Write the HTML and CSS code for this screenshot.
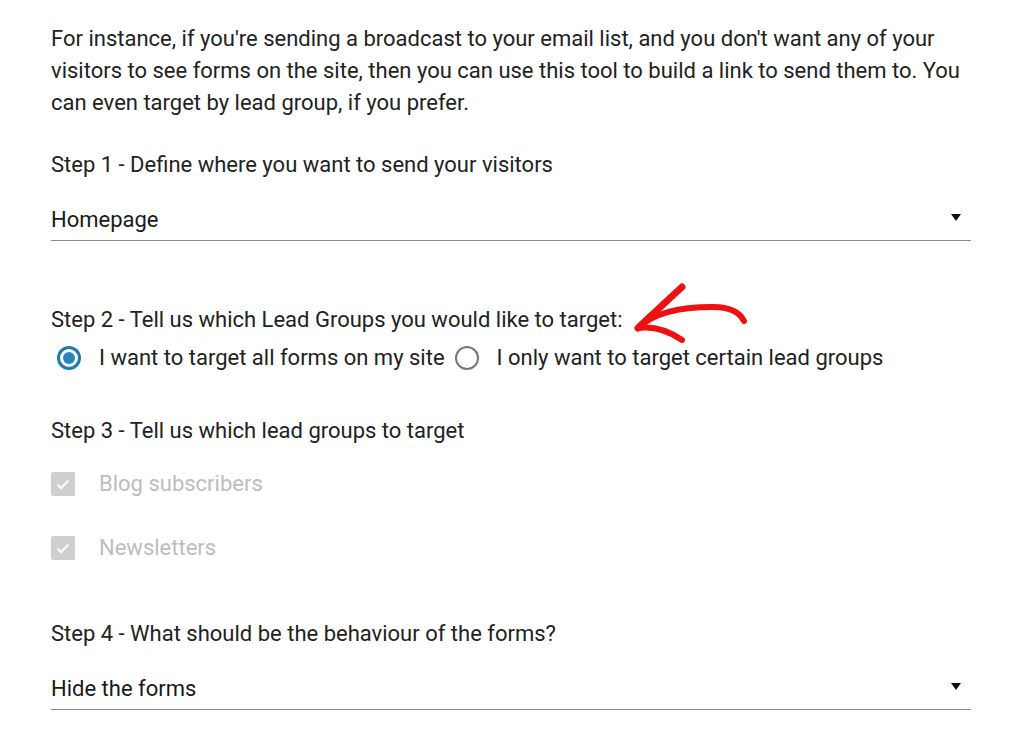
FILE: index.html
```html
<!DOCTYPE html>
<html lang="en">
<head>
    <meta charset="UTF-8">
    <meta name="viewport" content="width=device-width, initial-scale=1.0">
    <title>Link Builder</title>
    <link rel="stylesheet" href="styles.css">
</head>
<body>
    <div class="container">
        <p class="intro">For instance, if you're sending a broadcast to your email list, and you don't want any of your visitors to see forms on the site, then you can use this tool to build a link to send them to. You can even target by lead group, if you prefer.</p>

        <div class="step step-one">
            <div class="step-label">Step 1 - Define where you want to send your visitors</div>
            <div class="select">
                <span>Homepage</span>
                <svg class="caret" width="10" height="7" viewBox="0 0 10 7"><path d="M0 0 H10 L5 7 Z" fill="#111"/></svg>
            </div>
        </div>

        <div class="step step-two">
            <div class="step-label">Step 2 - Tell us which Lead Groups you would like to target:</div>
            <div class="radio-row">
                <label class="radio checked"><span class="radio-dot"></span>I want to target all forms on my site</label>
                <label class="radio"><span class="radio-dot"></span>I only want to target certain lead groups</label>
            </div>
            <!-- hand drawn arrow pointing at the label -->
            <svg class="arrow" width="130" height="75" viewBox="0 0 130 75">
                <path d="M57 7 C46 17 28 34 13 48" stroke="#ee1111" stroke-width="7" fill="none" stroke-linecap="round"/>
                <path d="M13 48 C30 31 60 27 88 27 C104 27 114 31 119 41" stroke="#ee1111" stroke-width="6" fill="none" stroke-linecap="round"/>
                <path d="M13 48 C28 46 44 51 57 60" stroke="#ee1111" stroke-width="6" fill="none" stroke-linecap="round"/>
            </svg>
        </div>

        <div class="step step-three">
            <div class="step-label">Step 3 - Tell us which lead groups to target</div>
            <div class="checks">
                <label class="check"><span class="check-box"><svg width="14" height="11" viewBox="0 0 14 11"><path d="M1.5 5.5 L5 9 L12.5 1.5" stroke="#fff" stroke-width="2" fill="none"/></svg></span>Blog subscribers</label>
                <label class="check"><span class="check-box"><svg width="14" height="11" viewBox="0 0 14 11"><path d="M1.5 5.5 L5 9 L12.5 1.5" stroke="#fff" stroke-width="2" fill="none"/></svg></span>Newsletters</label>
            </div>
        </div>

        <div class="step step-four">
            <div class="step-label">Step 4 - What should be the behaviour of the forms?</div>
            <div class="select">
                <span>Hide the forms</span>
                <svg class="caret" width="10" height="7" viewBox="0 0 10 7"><path d="M0 0 H10 L5 7 Z" fill="#111"/></svg>
            </div>
        </div>
    </div>
</body>
</html>
```

FILE: styles.css
```css
* {
    margin: 0;
    padding: 0;
    box-sizing: border-box;
}

body {
    background-color: white;
    font-family: Roboto, "Liberation Sans", sans-serif;
    font-size: 22px;
    line-height: 32px;
    color: #222;
}

.container {
    width: 1024px;
    padding: 23px 53px 0 51px;
    position: relative;
}

.intro {
    margin-bottom: 30px;
}

.step {
    display: flex;
    flex-direction: column;
}

.step-label {
    height: 32px;
}

.select {
    display: flex;
    justify-content: space-between;
    align-items: center;
    height: 41px;
    margin-top: 19px;
    padding-right: 10px;
    border-bottom: 1px solid #8a8a8a;
    font-size: 22px;
    color: #1a1a1a;
}

.select .caret {
    margin-top: -6px;
}

.step-two {
    margin-top: 63px;
    position: relative;
}

.radio-row {
    display: flex;
    height: 32px;
    margin-top: 6px;
}

.radio {
    display: flex;
    align-items: center;
    padding-left: 6px;
}

.radio + .radio {
    padding-left: 10px;
}

.radio-dot {
    width: 24px;
    height: 24px;
    border-radius: 50%;
    border: 2px solid #777;
    margin-right: 18px;
    position: relative;
}

.radio.checked .radio-dot {
    border: 3px solid #1f7ab0;
}

.radio.checked .radio-dot::after {
    content: "";
    position: absolute;
    top: 3px;
    left: 3px;
    width: 12px;
    height: 12px;
    border-radius: 50%;
    background-color: #2a84b8;
}

.arrow {
    position: absolute;
    left: 574px;
    top: -24px;
}

.step-three {
    margin-top: 41px;
}

.checks {
    display: flex;
    flex-direction: column;
    gap: 32px;
    margin-top: 21px;
}

.check {
    display: flex;
    align-items: center;
    height: 32px;
    color: #bdbdbd;
}

.check-box {
    width: 24px;
    height: 24px;
    border-radius: 2px;
    background-color: #cfcfcf;
    margin-right: 24px;
    display: flex;
    align-items: center;
    justify-content: center;
}

.step-four {
    margin-top: 54px;
}

.step-four .select {
    margin-top: 19px;
}
```
